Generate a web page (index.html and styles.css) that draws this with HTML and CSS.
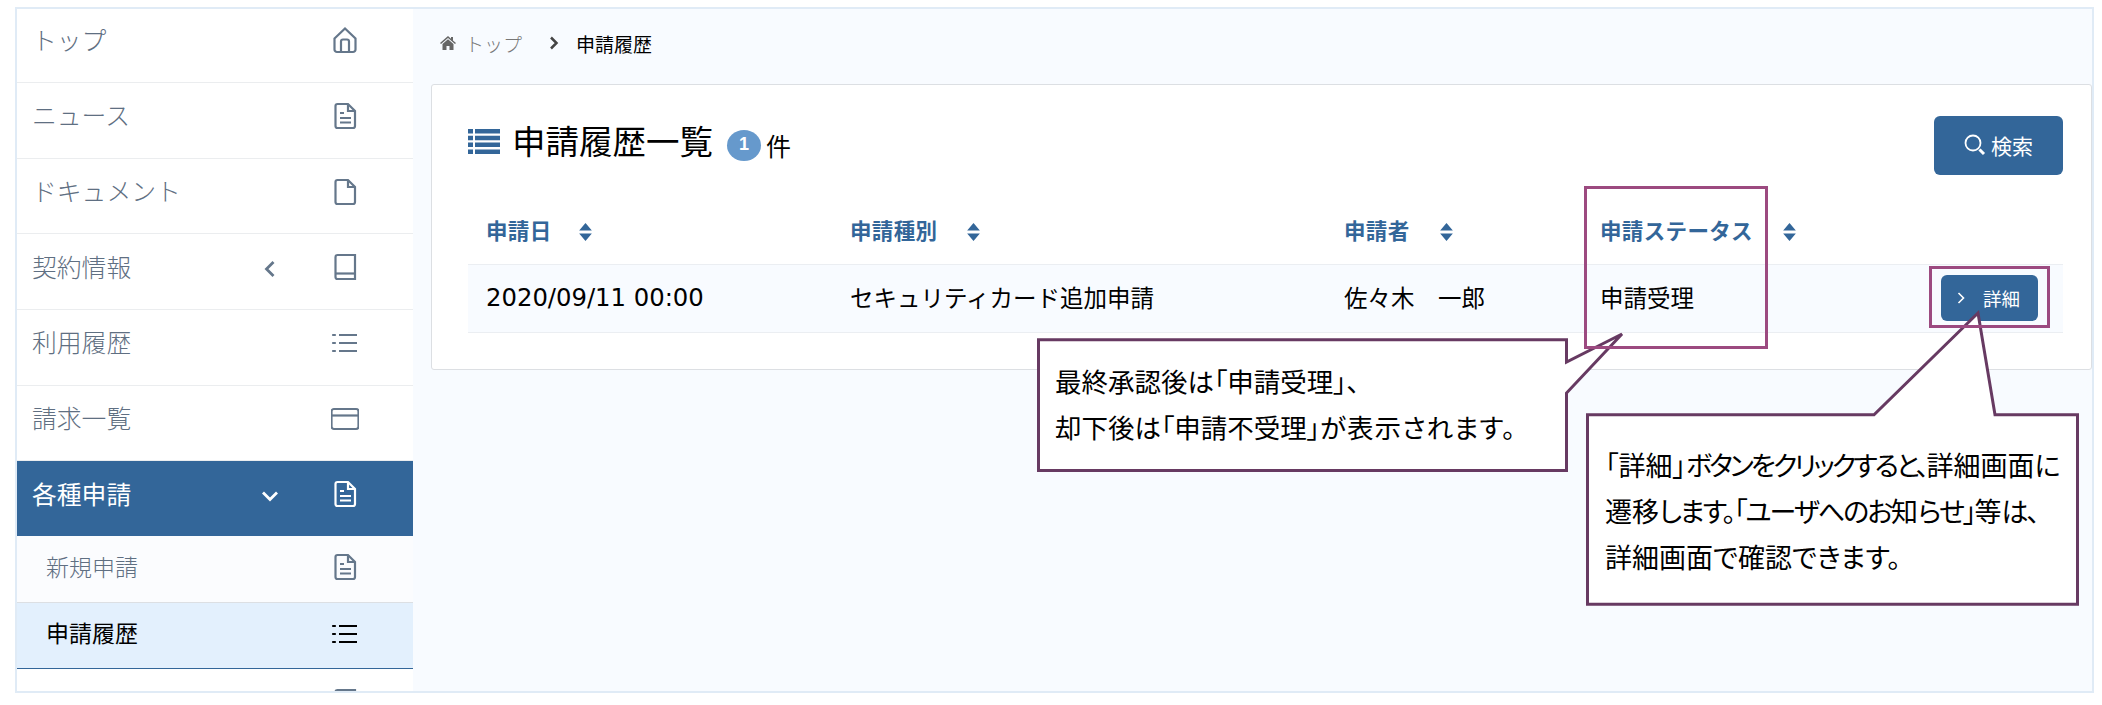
FILE: index.html
```html
<!DOCTYPE html>
<html lang="ja">
	<head>
		<meta charset="utf-8">
		<title>申請履歴一覧</title>
		<link rel="stylesheet" href="styles.css">
	</head>
	<body>
		<div class="frame">
			<nav class="sidebar">
				<a class="nav-item"><span class="nav-label">トップ</span>
					<svg class="nav-icon" viewBox="0 0 28 28"><path d="M3.5 12.5 14 2.5l10.500 10v11a2.500 2.500 0 0 1-2.500 2.500H6a2.500 2.500 0 0 1-2.500-2.500z"/><path d="M10 26V15.500a2 2 0 0 1 2-2h4a2 2 0 0 1 2 2V26"/></svg>
				</a>
				<a class="nav-item"><span class="nav-label">ニュース</span>
					<svg class="nav-icon" viewBox="0 0 28 28"><path d="M6.500 2H17l7 7v15a2 2 0 0 1-2 2H6.500a2 2 0 0 1-2-2V4a2 2 0 0 1 2-2z"/><path d="M17 2v7h7M9 11h4M9 16h11M9 20.500h11"/></svg>
				</a>
				<a class="nav-item"><span class="nav-label">ドキュメント</span>
					<svg class="nav-icon" viewBox="0 0 28 28"><path d="M6.500 2H17l7 7v15a2 2 0 0 1-2 2H6.500a2 2 0 0 1-2-2V4a2 2 0 0 1 2-2z"/><path d="M17 2v7h7"/></svg>
				</a>
				<a class="nav-item"><span class="nav-label">契約情報</span>
					<svg class="nav-caret" viewBox="0 0 20 20"><path d="M13.500 3 6.500 10l7 7"/></svg>
					<svg class="nav-icon" viewBox="0 0 28 28"><path d="M6.500 2H24v24H6.500a2 2 0 0 1-2-2V4a2 2 0 0 1 2-2z"/><path d="M4.500 20.500H24"/></svg>
				</a>
				<a class="nav-item"><span class="nav-label">利用履歴</span>
					<svg class="nav-icon" viewBox="0 0 28 28"><path d="M8 6h18M8 14h18M8 22h18"/><path class="dots" d="M2 6h2M2 14h2M2 22h2"/></svg>
				</a>
				<a class="nav-item"><span class="nav-label">請求一覧</span>
					<svg class="nav-icon" viewBox="0 0 28 28"><rect x="0.500" y="4" width="27" height="20" rx="2.500"/><path d="M.5 10.500h27"/></svg>
				</a>
				<a class="nav-item open"><span class="nav-label">各種申請</span>
					<svg class="nav-caret" viewBox="0 0 20 20"><path d="M3 6.500l7 7 7-7"/></svg>
					<svg class="nav-icon" viewBox="0 0 28 28"><path d="M6.500 2H17l7 7v15a2 2 0 0 1-2 2H6.500a2 2 0 0 1-2-2V4a2 2 0 0 1 2-2z"/><path d="M17 2v7h7M9 11h4M9 16h11M9 20.500h11"/></svg>
				</a>
				<a class="nav-sub"><span class="nav-label">新規申請</span>
					<svg class="nav-icon" viewBox="0 0 28 28"><path d="M6.500 2H17l7 7v15a2 2 0 0 1-2 2H6.500a2 2 0 0 1-2-2V4a2 2 0 0 1 2-2z"/><path d="M17 2v7h7M9 11h4M9 16h11M9 20.500h11"/></svg>
				</a>
				<a class="nav-sub active"><span class="nav-label">申請履歴</span>
					<svg class="nav-icon" viewBox="0 0 28 28"><path d="M8 6h18M8 14h18M8 22h18"/><path class="dots" d="M2 6h2M2 14h2M2 22h2"/></svg>
				</a>
				<a class="nav-item"><span class="nav-label"></span>
					<svg class="nav-icon" viewBox="0 0 28 28"><path d="M6.500 2H24v24H4.500V4a2 2 0 0 1 2-2z"/></svg>
				</a>
			</nav>

			<main class="content">
				<div class="breadcrumb">
					<svg class="crumb-home" viewBox="0 0 16 14"><path d="M8 0 0 7l1 1 7-6 7 6 1-1-3-2.600V1h-2v1.700z"/><path d="M2.500 8v6h4v-4h3v4h4V8L8 3.300z"/></svg>
					<span class="crumb-link">トップ</span>
					<svg class="crumb-sep" viewBox="0 0 10 14"><path d="M2 1.500 7.500 7 2 12.500"/></svg>
					<span class="crumb-now">申請履歴</span>
				</div>

				<section class="card">
					<div class="card-head">
						<div class="card-title">
							<svg class="title-icon" viewBox="0 0 32 25"><path d="M0 0h5v4.500H0zM7 0h25v4.500H7zM0 6.800h5v4.500H0zM7 6.800h25v4.500H7zM0 13.600h5v4.500H0zM7 13.600h25v4.500H7zM0 20.400h5v4.500H0zM7 20.400h25v4.500H7z"/></svg>
							<h1>申請履歴一覧</h1>
							<span class="count">1</span>
							<span class="count-unit">件</span>
						</div>
						<button class="search-btn">
							<svg viewBox="0 0 22 22"><circle cx="9" cy="9" r="7.500"/><path class="handle" d="M15.500 15.500l4.500 4.500"/></svg>
							検索
						</button>
					</div>

					<table class="history">
						<colgroup>
							<col class="col-date">
							<col class="col-type">
							<col class="col-user">
							<col class="col-status">
							<col>
						</colgroup>
						<thead>
							<tr>
								<th class="th-date">申請日<svg class="sort" viewBox="0 0 12 17"><path d="M6 0l6 7H0zM0 10h12l-6 7z"/></svg></th>
								<th>申請種別<svg class="sort" viewBox="0 0 12 17"><path d="M6 0l6 7H0zM0 10h12l-6 7z"/></svg></th>
								<th>申請者<svg class="sort" viewBox="0 0 12 17"><path d="M6 0l6 7H0zM0 10h12l-6 7z"/></svg></th>
								<th>申請ステータス<svg class="sort" viewBox="0 0 12 17"><path d="M6 0l6 7H0zM0 10h12l-6 7z"/></svg></th>
								<th></th>
							</tr>
						</thead>
						<tbody>
							<tr>
								<td class="date">2020/09/11 00:00</td>
								<td>セキュリティカード追加申請</td>
								<td>佐々木　一郎</td>
								<td>申請受理</td>
								<td class="actions">
									<button class="detail-btn"><svg viewBox="0 0 8 14"><path d="M1.500 2 6.500 7l-5 5"/></svg>詳細</button>
								</td>
							</tr>
						</tbody>
					</table>
				</section>
			</main>
		</div>

		<!-- annotations drawn over the screen -->
		<svg class="note-shapes" viewBox="0 0 2102 705">
			<path d="M1038.500 339.800H1566.500V362L1622 334 1566.500 393V470.500H1038.500Z"/>
			<path d="M1587.500 414.800H1874L1978 313 1995 414.800H2077.500V604.300H1587.500Z"/>
		</svg>
		<div class="mark mark-status"></div>
		<div class="mark mark-detail"></div>
		<p class="note note-status">最終承認後は「申請受理」、<br>却下後は「申請不受理」<span class="wide">が表示されます。</span></p>
		<p class="note note-detail">「詳細」<span class="kana-tight">ボタンをクリックすると、</span>詳細画面に<br>遷移<span class="kana">します。「ユーザへのお</span>知<span class="kana">らせ」</span>等<span class="kana">は、</span><br>詳細画面で確認できます。</p>
	</body>
</html>
```

FILE: styles.css
```css
*, *::before, *::after {
	margin: 0;
	padding: 0;
	box-sizing: border-box;
}
body {
	position: relative;
	height: 705px;
	overflow: hidden;
	background-color: #fff;
	color: #000;
	font-family: "Noto Sans CJK JP", "Noto Sans", sans-serif;
}
.frame {
	display: flex;
	margin: 7px 8px 0 15px;
	height: 686px;
	border: 2px solid #e0ebf6;
}

/* sidebar */
.sidebar {
	flex: 0 0 396px;
	overflow: hidden;
	background-color: #fff;
	color: #5f6f82;
}
.nav-item, .nav-sub {
	display: flex;
	align-items: center;
	padding-right: 48px;
}
.nav-item {
	height: 75.7px;
	padding-left: 15px;
	padding-bottom: 9px;
	border-bottom: 1px solid #ebedef;
}
.nav-item:first-child {
	margin-top: -1.7px;
}
.nav-item .nav-label {
	flex: 1;
	margin-bottom: 3px;
	font-size: 24.800px;
	font-weight: 300;
}
.nav-sub {
	height: 67px;
	padding-left: 29px;
	padding-bottom: 4px;
	background-color: #fbfcfe;
	border-bottom: 1px solid #dcdfe3;
}
.nav-sub .nav-label {
	flex: 1;
	margin-bottom: 3px;
	font-size: 23px;
	font-weight: 300;
}
.nav-icon {
	flex: 0 0 28px;
	width: 28px;
	height: 28px;
	margin: 0 6px;
	fill: none;
	stroke: #65778b;
	stroke-width: 2.200;
}
.nav-icon .dots {
	stroke-linecap: round;
}
.nav-caret {
	flex: 0 0 20px;
	width: 20px;
	height: 20px;
	margin: 4px 45px 0 0;
	fill: none;
	stroke: #65778b;
	stroke-width: 2.800;
}
.nav-item.open {
	height: 75px;
	background-color: #336699;
	border-bottom: none;
	color: #fff;
}
.nav-item.open .nav-label {
	font-weight: 400;
}
.nav-item.open .nav-icon, .nav-item.open .nav-caret {
	stroke: #fff;
}
.nav-sub.active {
	height: 66px;
	background-color: #e3f0fd;
	border-bottom: 1px solid #336699;
	color: #000;
}
.nav-sub.active .nav-label {
	font-weight: 400;
}
.nav-sub.active .nav-icon {
	stroke: #000;
}

/* main area */
.content {
	flex: 1;
	padding-left: 18px;
	background-color: #f8fbff;
}
.breadcrumb {
	display: flex;
	align-items: center;
	height: 75px;
	padding-left: 9px;
	padding-bottom: 7px;
	font-size: 19px;
}
.crumb-home {
	width: 16px;
	height: 14px;
	fill: #666;
}
.crumb-link {
	margin-left: 9px;
	color: #777;
	font-weight: 300;
}
.crumb-sep {
	width: 10px;
	height: 14px;
	margin: 0 17px 0 27px;
	fill: none;
	stroke: #444;
	stroke-width: 2.500;
}
.card {
	height: 286px;
	padding: 31px 28px 0 36px;
	background-color: #fff;
	border: 1px solid #dcdfe3;
	border-radius: 3px;
}
.card-head {
	display: flex;
	align-items: center;
	justify-content: space-between;
	height: 59px;
}
.card-title {
	display: flex;
	align-items: center;
}
.title-icon {
	width: 32px;
	height: 25px;
	margin-bottom: 9px;
	fill: #336699;
}
.card-title h1 {
	margin: 0 0 12px 12px;
	font-size: 33.500px;
	font-weight: 400;
	line-height: 40px;
}
.count {
	width: 34px;
	height: 31px;
	margin: 0 0 1px 14px;
	border-radius: 50%;
	background-color: #6699cc;
	color: #fff;
	font-family: "Liberation Sans", sans-serif;
	font-size: 18px;
	font-weight: bold;
	line-height: 29px;
	text-align: center;
}
.count-unit {
	margin: 0 0 1px 5px;
	font-size: 25px;
	line-height: 31px;
}
.search-btn {
	display: flex;
	align-items: center;
	justify-content: center;
	gap: 5px;
	width: 129px;
	height: 59px;
	padding-bottom: 2px;
	border: none;
	border-radius: 6px;
	background-color: #336699;
	color: #fff;
	font-family: inherit;
	font-size: 21px;
}
.search-btn svg {
	width: 22px;
	height: 22px;
	fill: none;
	stroke: #fff;
	stroke-width: 1.800;
}
.search-btn .handle {
	stroke-width: 3;
}

/* table */
.history {
	width: 100%;
	table-layout: fixed;
	border-collapse: collapse;
}
.col-date {
	width: 364px;
}
.col-type {
	width: 494px;
}
.col-user {
	width: 256px;
}
.col-status {
	width: 270px;
}
.history th {
	height: 89px;
	padding: 0 0 19px 18px;
	vertical-align: bottom;
	text-align: left;
	color: #336699;
	font-size: 21.500px;
	font-weight: 700;
	line-height: 30px;
	letter-spacing: 0.350px;
	border-bottom: 1px solid #ebeef2;
	white-space: nowrap;
}
.sort {
	width: 13px;
	height: 18px;
	margin-left: 30px;
	vertical-align: -2px;
	fill: #336699;
}
.th-date .sort {
	margin-left: 27px;
}
.history td {
	height: 68px;
	padding: 0 0 3px 18px;
	background-color: #f8fbff;
	font-size: 23.500px;
	border-bottom: 1px solid #ebeef2;
	white-space: nowrap;
}
.history td.date {
	padding-bottom: 1px;
	font-family: "DejaVu Sans", sans-serif;
	font-size: 24.300px;
}
.history td.actions {
	padding: 0 25px 0 0;
	text-align: right;
}
.detail-btn {
	display: inline-flex;
	align-items: center;
	width: 97px;
	height: 46px;
	padding-left: 16px;
	border: none;
	border-radius: 6px;
	background-color: #336699;
	color: #fff;
	font-family: inherit;
	font-size: 18.500px;
	vertical-align: middle;
}
.detail-btn svg {
	width: 8px;
	height: 14px;
	margin-right: 18px;
	fill: none;
	stroke: #fff;
	stroke-width: 1.600;
}

/* annotations */
.note-shapes {
	position: absolute;
	left: 0;
	top: 0;
	width: 2102px;
	height: 705px;
	fill: #fff;
	stroke: #673a62;
	stroke-width: 3;
}
.mark {
	position: absolute;
	border: 3px solid #9c4a80;
}
.mark-status {
	left: 1584px;
	top: 186px;
	width: 184px;
	height: 163px;
}
.mark-detail {
	left: 1929px;
	top: 266px;
	width: 121px;
	height: 62px;
}
.note {
	position: absolute;
	font-size: 26.500px;
	line-height: 46px;
	font-feature-settings: "palt";
	white-space: nowrap;
}
.note-status {
	left: 1055px;
	top: 358px;
}
.note-status .wide {
	letter-spacing: 1px;
}
.note-detail {
	left: 1605px;
	top: 442px;
	font-size: 27px;
}
.note-detail .kana {
	letter-spacing: -2px;
}
.note-detail .kana-tight {
	letter-spacing: -2.900px;
}
```
